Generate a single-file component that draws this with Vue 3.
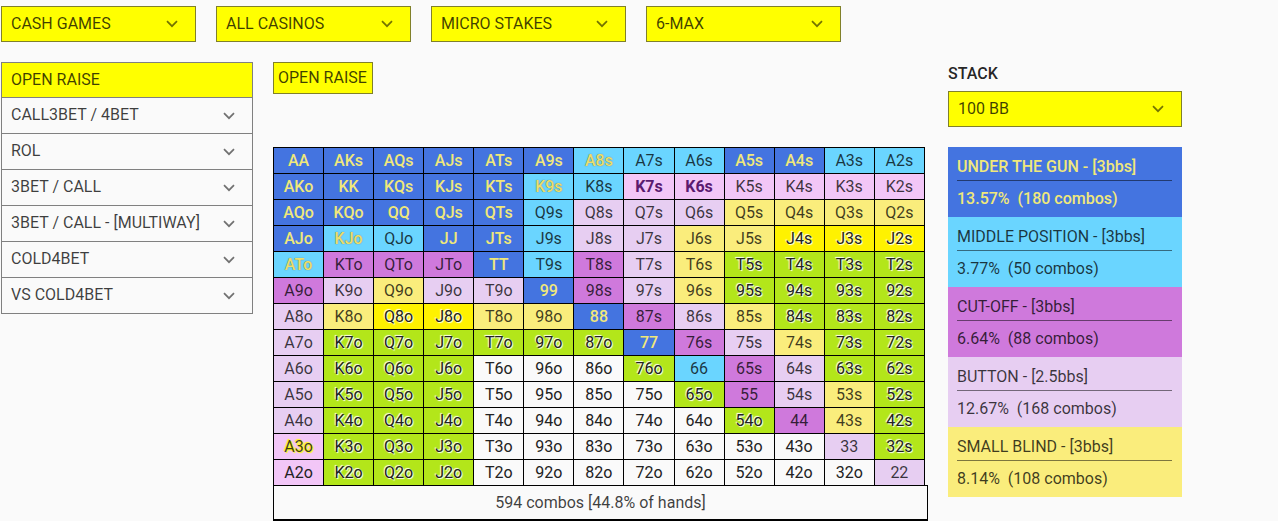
<script setup>
import { ref } from 'vue'

const filters = [
  { id: 'game', label: 'Game type', value: 'CASH GAMES' },
  { id: 'casino', label: 'Casino', value: 'ALL CASINOS' },
  { id: 'stakes', label: 'Stakes', value: 'MICRO STAKES' },
  { id: 'table', label: 'Table size', value: '6-MAX' },
]

const situations = [
  'OPEN RAISE',
  'CALL3BET / 4BET',
  'ROL',
  '3BET / CALL',
  '3BET / CALL - [MULTIWAY]',
  'COLD4BET',
  'VS COLD4BET',
]
const active = ref(0)

const kinds = {
  u: 'utg',
  m: 'mid',
  x: 'mid-mix',
  c: 'cutoff',
  b: 'button',
  s: 'small',
  v: 'small-wide',
  g: 'wide',
  p: 'pink-strong',
  q: 'pink',
  r: 'pink-mix',
  t: 'pink-dark',
  n: 'fold',
}
const ranks = 'AKQJT98765432'
const layout = [
  'uuuuuuxmmuumm',
  'uuuuuxmppqqqq',
  'uuuuumbbbssss',
  'uxmuumbbssvvv',
  'xcccumcbsgggg',
  'cbsbbucbsgggg',
  'bsvvssucbsggg',
  'bggggggucbsgg',
  'bgggnnngmcbgg',
  'bgggnnnngcbsg',
  'bgggnnnnngcsg',
  'rgggnnnnnnnbg',
  'tgggnnnnnnnnb',
]
const rows = layout.map((line, i) =>
  [...line].map((code, j) => ({
    name: ranks[Math.min(i, j)] + ranks[Math.max(i, j)] + (i === j ? '' : i < j ? 's' : 'o'),
    kind: kinds[code],
  })),
)

const positions = [
  { name: 'UNDER THE GUN - [3bbs]', share: '13.57%', combos: 180, kind: 'utg' },
  { name: 'MIDDLE POSITION - [3bbs]', share: '3.77%', combos: 50, kind: 'mid' },
  { name: 'CUT-OFF - [3bbs]', share: '6.64%', combos: 88, kind: 'cutoff' },
  { name: 'BUTTON - [2.5bbs]', share: '12.67%', combos: 168, kind: 'button' },
  { name: 'SMALL BLIND - [3bbs]', share: '8.14%', combos: 108, kind: 'small' },
]
</script>

<template>
  <div class="page">
    <div class="filters">
      <div v-for="f in filters" :key="f.id" class="picker">
        <select :id="f.id" :aria-label="f.label">
          <option>{{ f.value }}</option>
        </select>
        <svg class="chevron" viewBox="0 0 12 8" aria-hidden="true"><path d="M1 1.2 6 6.2 11 1.2" /></svg>
      </div>
    </div>

    <div class="columns">
      <nav class="menu" aria-label="Situations">
        <button
          v-for="(s, i) in situations"
          :key="s"
          type="button"
          :class="['item', { active: active === i }]"
          @click="active = i"
        >
          <span>{{ s }}</span>
          <svg v-if="i > 0" class="chevron" viewBox="0 0 12 8" aria-hidden="true"><path d="M1 1.2 6 6.2 11 1.2" /></svg>
        </button>
      </nav>

      <main class="chart">
        <button type="button" class="tag">OPEN RAISE</button>
        <div class="board">
          <table class="hands" aria-label="Starting hands">
            <tbody>
              <tr v-for="(row, i) in rows" :key="i">
                <td v-for="hand in row" :key="hand.name" :class="hand.kind">{{ hand.name }}</td>
              </tr>
            </tbody>
          </table>
          <div class="total">594 combos [44.8% of hands]</div>
        </div>
      </main>

      <aside>
        <label class="stack-label" for="stack">STACK</label>
        <div class="picker">
          <select id="stack">
            <option>100 BB</option>
          </select>
          <svg class="chevron" viewBox="0 0 12 8" aria-hidden="true"><path d="M1 1.2 6 6.2 11 1.2" /></svg>
        </div>
        <div class="legend">
          <section v-for="p in positions" :key="p.name" :class="['position', p.kind]">
            <div class="name">{{ p.name }}</div>
            <div class="share">{{ p.share }}&nbsp; ({{ p.combos }} combos)</div>
          </section>
        </div>
      </aside>
    </div>
  </div>
</template>

<style>
body {
  background: #fafafa;
}
</style>

<style scoped>
.page {
  box-sizing: border-box;
  padding: 6px 96px 0 1px;
  font: 400 16px/24px Roboto, sans-serif;
  color: rgba(0, 0, 0, 0.76);
}
.page *,
.page *::before {
  box-sizing: border-box;
}
button,
select {
  font: inherit;
  color: inherit;
  border-radius: 0;
  margin: 0;
}
.filters {
  display: grid;
  grid-template-columns: repeat(4, 1fr);
  gap: 20px;
  max-width: 840px;
}
.picker {
  display: grid;
  align-items: center;
}
.picker > * {
  grid-area: 1 / 1;
}
.picker select {
  appearance: none;
  width: 100%;
  height: 36px;
  padding: 0 40px 0 9px;
  border: 1px solid #80802a;
  background: #ff0;
}
.chevron {
  width: 12px;
  height: 8px;
  fill: none;
  stroke: rgba(0, 0, 0, 0.55);
  stroke-width: 1.7;
}
.picker .chevron {
  justify-self: end;
  margin-right: 18px;
  pointer-events: none;
}
.columns {
  display: grid;
  grid-template-columns: 252fr 655fr 234fr;
  align-items: start;
  gap: 20px;
  margin-top: 20px;
}
.menu {
  display: flex;
  flex-direction: column;
  border: 1px solid #808080;
}
.item {
  display: flex;
  align-items: center;
  justify-content: space-between;
  min-height: 36px;
  padding: 0 17px 2px 9px;
  border: 0;
  border-top: 1px solid #808080;
  background: transparent;
  text-align: left;
}
.item:first-child {
  min-height: 34px;
  padding-bottom: 0;
  border-top: 0;
}
.item.active {
  background: #ff0;
}
.item .chevron {
  margin-top: 3px;
}
.tag {
  display: block;
  height: 32px;
  padding: 0 5px 0 4px;
  border: 1px solid #80802a;
  background: #ff0;
}
.board {
  margin-top: 53px;
}
.hands {
  width: calc(100% - 3px);
  table-layout: fixed;
  border-collapse: collapse;
  text-align: center;
}
.hands td {
  height: 26px;
  padding: 0;
  border: 1px solid #000;
  line-height: 24px;
}
.total {
  margin-top: -1px;
  padding: 5px 0 4px;
  border: 1px solid #000;
  border-bottom-width: 2px;
  text-align: center;
}
.stack-label {
  display: block;
  padding-bottom: 5px;
  font-weight: 500;
  color: rgba(0, 0, 0, 0.87);
}
.legend {
  margin-top: 20px;
}
.position {
  padding: 8px 10px 6px 9px;
}
.position .name {
  padding-bottom: 1px;
  border-bottom: 1px solid rgba(0, 0, 0, 0.5);
}
.position .share {
  padding-top: 6px;
}
.utg {
  background: #4474e0;
  color: #f0e87a;
  font-weight: 500;
}
.mid,
.mid-mix {
  background: #6ad5ff;
}
.mid-mix {
  color: #ece070;
  font-weight: 500;
  text-shadow: 0 0 1px rgba(80, 80, 50, 0.9);
}
.cutoff {
  background: #cf79dc;
}
.button {
  background: #e7cef2;
}
.small {
  background: #faed7c;
}
.small-wide {
  background: #fff200;
}
.wide {
  background: #b3e61a;
}
.small-wide,
.wide {
  color: #222;
  text-shadow: 1px 1px 1px #fff, -1px -1px 1px #fff;
}
.pink,
.pink-strong,
.pink-mix,
.pink-dark {
  background: #f2c6f7;
}
.pink-strong {
  color: #5a1a70;
  font-weight: 700;
}
.pink-mix {
  text-shadow: 1px 1px 1px #ff0, -1px -1px 1px #ff0;
}
.pink-dark,
.fold {
  color: #222;
}
</style>
